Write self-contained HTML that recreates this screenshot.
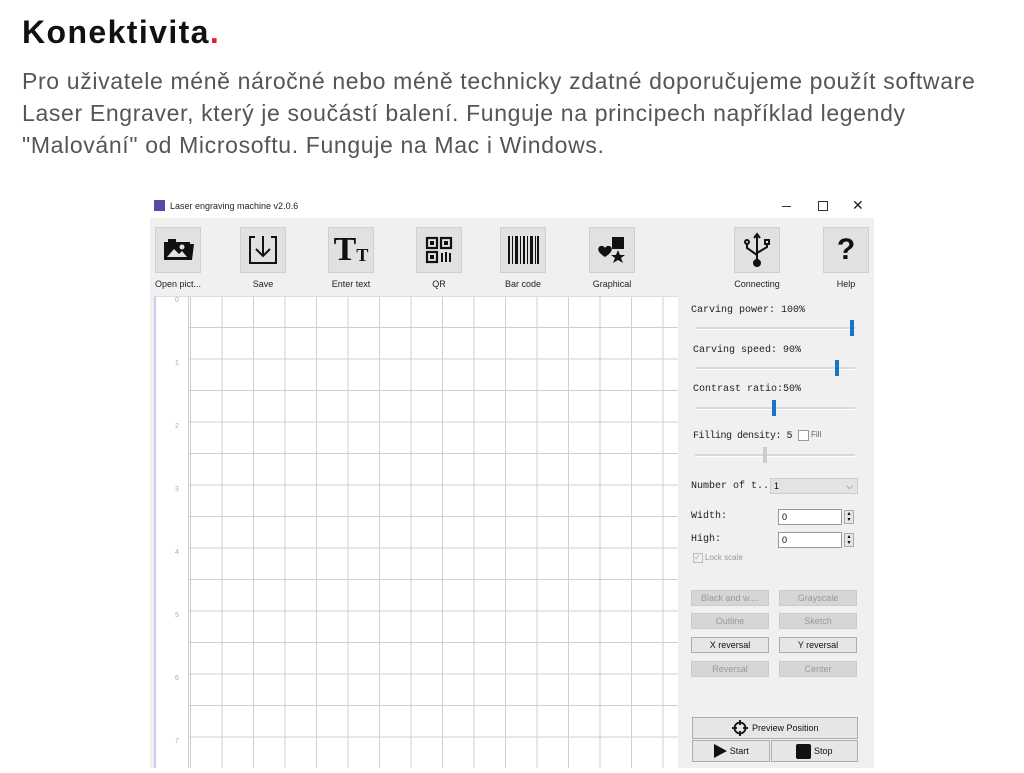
<!DOCTYPE html>
<html><head><meta charset="utf-8"><style>
body{margin:0;width:1024px;height:768px;overflow:hidden;background:#fff;font-family:"Liberation Sans",sans-serif;position:relative}
.a{position:absolute}
h1{position:absolute;left:22px;top:14px;margin:0;font-size:32px;font-weight:bold;color:#111;letter-spacing:1.4px}
.p{position:absolute;left:22px;font-size:23px;color:#555;white-space:nowrap;letter-spacing:0.65px}
.win{position:absolute;left:150px;top:196px;width:724px;height:572px;background:#f0f0f0}
.tb{position:absolute;left:0;top:0;width:724px;height:22px;background:#fff;font-size:9px;color:#222}
.btn{position:absolute;top:31px;width:46px;height:46px;background:#e1e1e1;border:1px solid #cfcfcf;box-sizing:border-box;display:flex;align-items:center;justify-content:center}
.lbl{position:absolute;top:83px;font-size:9px;color:#222;text-align:center;width:80px}
.mono{font-family:"Liberation Mono",monospace;font-size:10px;color:#222;position:absolute}
.trk{position:absolute;height:2px;background:#d8d8d8;border-bottom:1px solid #fff}
.th{position:absolute;width:4px;height:16px;background:#1a73c8}
.b2{position:absolute;width:78px;height:16px;background:#d6d6d6;border:1px solid #ccc;box-sizing:border-box;font-size:9px;color:#999;text-align:center;line-height:14px}
.b2.on{background:#e6e6e6;border-color:#adadad;color:#111}
</style></head><body>
<h1>Konektivita<span style="color:#e0202a">.</span></h1>
<div class="p" style="top:68px">Pro uživatele méně náročné nebo méně technicky zdatné doporučujeme použít software</div>
<div class="p" style="top:100px">Laser Engraver, který je součástí balení. Funguje na principech například legendy</div>
<div class="p" style="top:132px">"Malování" od Microsoftu. Funguje na Mac i Windows.</div>

<div class="win">
 <div class="tb">
  <div class="a" style="left:4px;top:4px;width:11px;height:11px;background:#5a4aa8"></div>
  <div class="a" style="left:20px;top:5px">Laser engraving machine v2.0.6</div>
  <div class="a" style="left:632px;top:10px;width:9px;height:1px;background:#333"></div>
  <div class="a" style="left:668px;top:5px;width:8px;height:8px;border:1px solid #333"></div>
  <div class="a" style="left:702px;top:1px;font-size:14px">✕</div>
 </div>
 <div class="btn" style="left:5px"><svg width="36" height="28" viewBox="0 0 36 28"><path d="M4 6h26v18H4z" fill="#111"/><path d="M30 8h4l-2 16h-2z" fill="#111"/><path d="M8 3h8v3H8z" fill="#111"/><path d="M7 21l7-8 5 5 3-3 5 6z" fill="#e1e1e1"/><circle cx="22" cy="11" r="2.5" fill="#e1e1e1"/></svg></div>
 <div class="lbl" style="left:-12px">Open pict...</div>
 <div class="btn" style="left:90px"><svg width="36" height="36" viewBox="0 0 36 36" fill="none" stroke="#111" stroke-width="2"><path d="M10 5H5v26h26V5h-5"/><path d="M18 4v20M11 17l7 7 7-7"/></svg></div>
 <div class="lbl" style="left:73px">Save</div>
 <div class="btn" style="left:178px"><span style="font-family:'Liberation Serif',serif;font-weight:bold;font-size:34px;color:#111">T</span><span style="font-family:'Liberation Serif',serif;font-weight:bold;font-size:18px;color:#111;margin-top:10px">T</span></div>
 <div class="lbl" style="left:161px">Enter text</div>
 <div class="btn" style="left:266px"><svg width="30" height="30" viewBox="0 0 30 30" fill="none" stroke="#111" stroke-width="2.2"><rect x="3" y="3" width="10" height="10"/><rect x="17" y="3" width="10" height="10"/><rect x="3" y="17" width="10" height="10"/><g fill="#111" stroke="none"><rect x="6" y="6" width="4" height="4"/><rect x="20" y="6" width="4" height="4"/><rect x="6" y="20" width="4" height="4"/><rect x="17" y="18" width="2" height="9"/><rect x="21" y="17" width="2" height="10"/><rect x="25" y="18" width="2" height="9"/></g></svg></div>
 <div class="lbl" style="left:249px">QR</div>
 <div class="btn" style="left:350px"><svg width="34" height="30" viewBox="0 0 34 30" fill="#111"><rect x="2" y="1" width="2" height="28"/><rect x="6" y="1" width="1" height="28"/><rect x="9" y="1" width="3" height="28"/><rect x="14" y="1" width="1" height="28"/><rect x="17" y="1" width="2" height="28"/><rect x="21" y="1" width="1" height="28"/><rect x="24" y="1" width="3" height="28"/><rect x="29" y="1" width="1" height="28"/><rect x="31" y="1" width="2" height="28"/></svg></div>
 <div class="lbl" style="left:333px">Bar code</div>
 <div class="btn" style="left:439px"><svg width="34" height="34" viewBox="0 0 34 34" fill="#111"><rect x="17" y="4" width="12" height="12"/><path d="M10 24C4 20 2 17 4 14c2-2 5-1 6 1 1-2 4-3 6-1 2 3 0 6-6 10z"/><path d="M23 17l2 5h5l-4 3 2 5-5-3-5 3 2-5-4-3h5z"/></svg></div>
 <div class="lbl" style="left:422px">Graphical</div>
 <div class="btn" style="left:584px"><svg width="30" height="38" viewBox="0 0 30 38" fill="none" stroke="#111" stroke-width="2"><path d="M15 3v28"/><path d="M12 7l3-4 3 4"/><path d="M5 12v5l10 7M25 12v4l-10 6"/><circle cx="5" cy="11" r="2"/><rect x="23" y="9" width="4" height="4"/><circle cx="15" cy="32" r="3" fill="#111"/></svg></div>
 <div class="lbl" style="left:567px">Connecting</div>
 <div class="btn" style="left:673px"><span style="font-size:30px;font-weight:bold;color:#111">?</span></div>
 <div class="lbl" style="left:656px">Help</div>

 <div class="a" style="left:4px;top:100px;width:524px;height:472px;background:#fff;border-left:2px solid #ccccf0;border-top:1px solid #ddd;box-sizing:border-box;
  background-image:linear-gradient(#cfcfcf 1px,transparent 1px),linear-gradient(90deg,#cfcfcf 1px,transparent 1px);background-size:31.5px 31.5px;background-position:34px 30px"></div>
 <div class="a" style="left:6px;top:101px;width:32px;height:471px;background:#fff;border-right:1px solid #cfcfcf"></div>
 <div class="a" style="left:25px;top:73px;font-size:7px;color:#aaa;line-height:63px">0<br>1<br>2<br>3<br>4<br>5<br>6<br>7</div>

 <div class="mono" style="left:541px;top:109px">Carving power: 100%</div>
 <div class="trk" style="left:545px;top:131px;width:160px"></div><div class="th" style="left:700px;top:124px"></div>
 <div class="mono" style="left:543px;top:149px">Carving speed: 90%</div>
 <div class="trk" style="left:545px;top:171px;width:160px"></div><div class="th" style="left:685px;top:164px"></div>
 <div class="mono" style="left:543px;top:188px">Contrast ratio:50%</div>
 <div class="trk" style="left:545px;top:211px;width:160px"></div><div class="th" style="left:622px;top:204px"></div>
 <div class="mono" style="left:543px;top:235px;font-size:10px;letter-spacing:-0.5px">Filling density: 5</div>
 <div class="a" style="left:648px;top:234px;width:9px;height:9px;background:#fff;border:1px solid #999"></div>
 <div class="a" style="left:661px;top:234px;font-size:8px;color:#666">Fill</div>
 <div class="trk" style="left:545px;top:258px;width:160px"></div><div class="th" style="left:613px;top:251px;background:#ccc"></div>
 <div class="mono" style="left:541px;top:285px">Number of t...</div>
 <div class="a" style="left:620px;top:282px;width:88px;height:16px;background:#e3e3e3;border:1px solid #ccc;box-sizing:border-box;font-size:9px;padding-left:3px;line-height:14px">1<span style="float:right;margin-right:4px;color:#666">⌵</span></div>
 <div class="mono" style="left:541px;top:315px">Width:</div>
 <div class="a" style="left:628px;top:313px;width:64px;height:16px;background:#fff;border:1px solid #999;box-sizing:border-box;font-size:9px;padding-left:3px;line-height:14px">0</div>
 <div class="a" style="left:694px;top:314px;width:10px;height:14px;background:#e6e6e6;border:1px solid #aaa;box-sizing:border-box;font-size:6px;line-height:6px;text-align:center">▴<br>▾</div>
 <div class="mono" style="left:541px;top:338px">High:</div>
 <div class="a" style="left:628px;top:336px;width:64px;height:16px;background:#fff;border:1px solid #999;box-sizing:border-box;font-size:9px;padding-left:3px;line-height:14px">0</div>
 <div class="a" style="left:694px;top:337px;width:10px;height:14px;background:#e6e6e6;border:1px solid #aaa;box-sizing:border-box;font-size:6px;line-height:6px;text-align:center">▴<br>▾</div>
 <div class="a" style="left:543px;top:357px;width:8px;height:8px;border:1px solid #bbb;font-size:8px;color:#aaa;line-height:8px">✓</div>
 <div class="a" style="left:555px;top:357px;font-size:8px;color:#999">Lock scale</div>

 <div class="b2" style="left:541px;top:394px">Black and w....</div>
 <div class="b2" style="left:629px;top:394px">Grayscale</div>
 <div class="b2" style="left:541px;top:417px">Outline</div>
 <div class="b2" style="left:629px;top:417px">Sketch</div>
 <div class="b2 on" style="left:541px;top:441px">X reversal</div>
 <div class="b2 on" style="left:629px;top:441px">Y reversal</div>
 <div class="b2" style="left:541px;top:465px">Reversal</div>
 <div class="b2" style="left:629px;top:465px">Center</div>

 <div class="a" style="left:542px;top:521px;width:166px;height:22px;background:#e6e6e6;border:1px solid #adadad;box-sizing:border-box;font-size:9px;color:#111;display:flex;align-items:center;justify-content:center"><svg width="18" height="18" viewBox="0 0 18 18" fill="none" stroke="#111" stroke-width="1.8"><circle cx="9" cy="9" r="5.5"/><path d="M9 1v5M9 12v5M1 9h5M12 9h5"/></svg>&nbsp;Preview Position</div>
 <div class="a" style="left:542px;top:544px;width:78px;height:22px;background:#e6e6e6;border:1px solid #adadad;box-sizing:border-box;font-size:9px;color:#111;display:flex;align-items:center;justify-content:center"><svg width="14" height="16"><path d="M1 1l13 7-13 7z" fill="#111"/></svg>&nbsp;Start</div>
 <div class="a" style="left:621px;top:544px;width:87px;height:22px;background:#e6e6e6;border:1px solid #adadad;box-sizing:border-box;font-size:9px;color:#111;display:flex;align-items:center;justify-content:center"><span style="display:inline-block;width:15px;height:15px;background:#111;border-radius:2px"></span>&nbsp;Stop</div>
</div>
</body></html>
